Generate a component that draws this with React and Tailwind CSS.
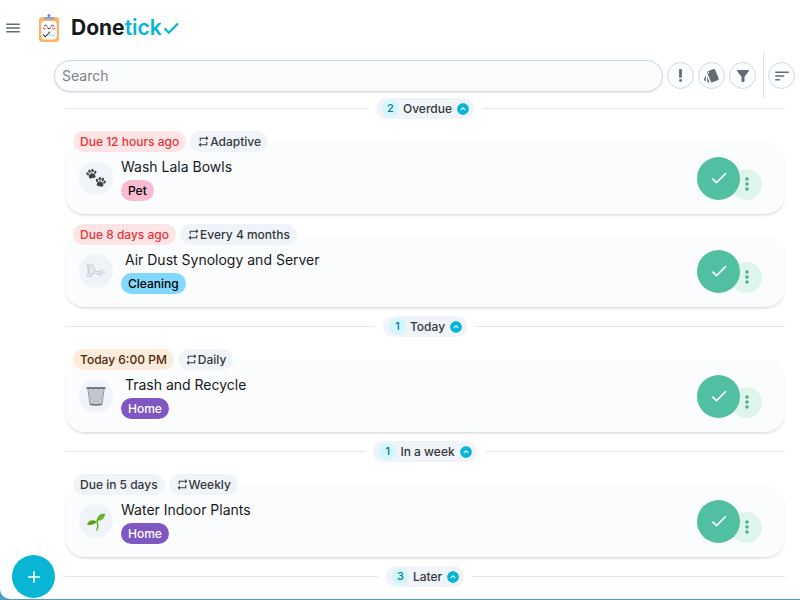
import {
  MdAdd,
  MdCheck,
  MdExpandCircleDown,
  MdFilterAlt,
  MdMenu,
  MdMoreVert,
  MdPriorityHigh,
  MdRepeat,
  MdSort,
  MdStyle,
} from 'react-icons/md';

const sections = [
  {
    title: 'Overdue',
    count: 2,
    chores: [
      { name: 'Wash Lala Bowls', due: 'Due 12 hours ago', status: 'overdue', repeat: 'Adaptive', label: 'Pet', icon: 'paws' },
      { name: ' Air Dust Synology and Server', due: 'Due 8 days ago', status: 'overdue', repeat: 'Every 4 months', label: 'Cleaning', icon: 'wind' },
    ],
  },
  {
    title: 'Today',
    count: 1,
    chores: [
      { name: ' Trash and Recycle', due: 'Today 6:00 PM', status: 'today', repeat: 'Daily', label: 'Home', icon: 'basket' },
    ],
  },
  {
    title: 'In a week',
    count: 1,
    chores: [
      { name: 'Water Indoor Plants', due: 'Due in 5 days', status: 'later', repeat: 'Weekly', label: 'Home', icon: 'plant' },
    ],
  },
  { title: 'Later', count: 3, chores: [] },
];

const dueColors = {
  overdue: 'bg-[#fde5e5] text-[#e5343a]',
  today: 'bg-[#fdecdb] text-[#49290c]',
  later: 'bg-[#f0f4f8] text-[#32383e]',
};

const labelColors = {
  Pet: 'bg-[#f8bbd0] text-black',
  Cleaning: 'bg-[#80d8ff] text-black',
  Home: 'bg-[#7e57c2] text-white',
};

function Logo() {
  return (
    <svg viewBox="0 0 22 30" className="h-[30px] w-[22px]" aria-hidden="true">
      <rect x="1" y="4" width="20" height="25" rx="3.5" fill="#fbb466" />
      <rect x="3.2" y="8" width="15.6" height="18.5" rx="4" fill="#fff" />
      <path d="M5.5 6.6c0-2 1.4-2.6 3.2-2.6h4.6c1.8 0 3.2.6 3.2 2.6z" fill="#8f9ce0" />
      <circle cx="11" cy="2.4" r="1.5" fill="#7785d3" />
      <path d="M6 13q1.5-2 3 0M13 13q1.5-2 3 0M9.4 15q1.6 1.6 3.2 0" fill="none" stroke="#333" strokeWidth="1" strokeLinecap="round" />
      <path d="M5.2 15.6h2.4M14.4 15.6h2.4" stroke="#f8697a" strokeWidth="1.4" strokeLinecap="round" />
      <path d="m5.4 21.8 1.8 2 4.6-4.6" fill="none" stroke="#333" strokeWidth="1.1" strokeLinecap="round" />
      <path d="M11.6 22.4h4.6" stroke="#a2f1e5" strokeWidth="1.8" strokeLinecap="round" />
    </svg>
  );
}

function Paw({ transform }) {
  return (
    <g transform={transform} fill="#414141">
      <path d="M0-.6c1.6 0 3.4 1.9 3.4 3.5 0 1.9-2 1.4-3.4 1.4s-3.4.5-3.4-1.4C-3.4 1.3-1.6-.6 0-.6z" />
      <ellipse cx="-3.9" cy="-.7" rx="1.1" ry="1.7" transform="rotate(-25 -3.9 -.7)" />
      <ellipse cx="-1.5" cy="-3" rx="1.2" ry="1.8" />
      <ellipse cx="1.5" cy="-3" rx="1.2" ry="1.8" />
      <ellipse cx="3.9" cy="-.7" rx="1.1" ry="1.7" transform="rotate(25 3.9 -.7)" />
    </g>
  );
}

function ChoreIcon({ name }) {
  return (
    <svg viewBox="0 0 20 20" className="size-5" fill="none" aria-hidden="true">
      {name === 'paws' && (
        <>
          <Paw transform="translate(5.6 5.8) rotate(-12)" />
          <Paw transform="translate(14.6 14) rotate(12)" />
        </>
      )}
      {name === 'wind' && (
        <>
          <path d="M1.5 3.5c3-1 6 .2 6.6 3l1.3 2.8-1.3.8.2 2.4-2.9.3.6 2.4H1.2l1.2-3.2z" fill="#e8ebef" stroke="#bcc4cd" strokeWidth=".8" />
          <path d="M3 4.5v8M5 5.5l1.5 2" stroke="#c6cdd5" strokeWidth=".9" />
          <path d="M10 10.5h4.500c2 0 2-2.300.5-2.300M10.500 12h6.800c2 0 1.700-2.500.2-2.300M11 13.400h3.600c1.600 0 1.400 2 .2 1.800" stroke="#c3cad2" strokeWidth=".9" strokeLinecap="round" />
        </>
      )}
      {name === 'basket' && (
        <>
          <path d="M1.8 2.2h16.4L16 18.5q-6 1.3-12 0z" fill="#d4d8dc" stroke="#7e868c" strokeWidth=".8" />
          <path d="m2 6 13 12M2.6 3 16.5 15M6 2.5 17 12M10.5 2.5 17.5 8M3 10l9 8.5M3.5 14l4.5 4.5M18 6 5 18M17.4 3 3.5 15M14 2.5 3 12M9.5 2.5 2.5 8M17 10l-9 8.5M16.5 14 12 18.5" stroke="#959ca2" strokeWidth=".6" />
          <path d="M1 2h18" stroke="#596269" strokeWidth="1.5" strokeLinecap="round" />
          <path d="M4 18.3q6 1.3 12 0" stroke="#687178" strokeWidth="1.2" />
        </>
      )}
      {name === 'plant' && (
        <>
          <path d="M11 19c1-3 .8-6.5 0-9" stroke="#65ad25" strokeWidth="1.5" strokeLinecap="round" />
          <path d="M10.6 10.2C10.8 5 14.5 2 19.3 2.5 18.8 7.5 15.5 10 10.6 10.2z" fill="#70bb2a" />
          <path d="M10.8 10.5C7 8.3 2.2 9 1 13.8c4.3.8 7.7-.2 9.8-3.3z" fill="#5ca91f" />
          <path d="M11.5 9.2C13 6.5 15.5 4.6 18 3.5M10 10.8c-2.5.4-5 1.2-7.5 2.5" stroke="#458f15" strokeWidth=".7" />
        </>
      )}
    </svg>
  );
}

function Chip({ className, children }) {
  return (
    <span className={`flex h-[21px] items-center whitespace-nowrap rounded-full px-[7px] text-[12px] font-medium leading-[21px] ${className}`}>
      {children}
    </span>
  );
}

function RoundButton({ label, children }) {
  return (
    <button
      type="button"
      aria-label={label}
      className="flex size-[27px] shrink-0 items-center justify-center rounded-full border border-[#cdd9e6] bg-[#fcfdff] text-[#636b74]"
    >
      {children}
    </button>
  );
}

function SectionDivider({ title, count }) {
  return (
    <div className="flex items-center gap-2 before:h-px before:flex-1 before:bg-[#e3e6e9] after:h-px after:flex-1 after:bg-[#e3e6e9]">
      <button
        type="button"
        className="flex h-[21px] items-center rounded-full bg-[#f0f4f8] pl-1.5 pr-1 text-[12px] font-medium leading-[21px] text-[#32383e]"
      >
        <span className="mr-1 flex size-[17px] items-center justify-center rounded-full bg-[#cff7fd] text-[11px] text-[#0e7490]">
          {count}
        </span>
        {title}
        <MdExpandCircleDown className="ml-1 size-[14px] rotate-180 text-[#06b6d4]" />
      </button>
    </div>
  );
}

function ChoreCard({ chore }) {
  return (
    <article>
      <div className="relative z-10 ml-2 flex gap-1">
        <Chip className={dueColors[chore.status]}>{chore.due}</Chip>
        <Chip className="bg-[#f0f4f8] text-[#32383e]">
          <MdRepeat className="size-[13px]" />
          {chore.repeat}
        </Chip>
      </div>
      <div className="-mt-2.5 flex h-[72px] items-center rounded-[20px] bg-[#fbfcfe] pl-3.5 pr-[23px] shadow-[0_2px_3px_-1px_rgba(21,21,21,0.2)]">
        <div className="flex size-[34px] shrink-0 items-center justify-center rounded-full bg-[#f0f4f8]">
          <ChoreIcon name={chore.icon} />
        </div>
        <div className="ml-2 min-w-0 flex-1 pt-px">
          <h3 className="truncate whitespace-pre text-[14px] leading-[22px] text-[#171a1c]">{chore.name}</h3>
          <div className="mt-0.5 flex">
            <Chip className={labelColors[chore.label]}>{chore.label}</Chip>
          </div>
        </div>
        <div className="flex items-end">
          <button
            type="button"
            aria-label="Complete"
            className="z-10 flex size-[43px] items-center justify-center rounded-full bg-[#51bfa1] text-white"
          >
            <MdCheck className="size-5" />
          </button>
          <button
            type="button"
            aria-label="More actions"
            className="-ml-[9px] flex size-[31px] items-center justify-center rounded-full bg-[#def5eb] text-[#42ad91]"
          >
            <MdMoreVert className="size-5" />
          </button>
        </div>
      </div>
    </article>
  );
}

export default function App() {
  return (
    <div className="h-screen overflow-hidden bg-[#4aa0bd] pb-px font-['Inter',sans-serif]">
      <div className="h-full overflow-hidden rounded-bl-[10px] bg-white">
        <header className="flex h-[53px] items-center pl-1 pt-0.5">
          <button type="button" aria-label="Menu" className="text-[#636b74]">
            <MdMenu className="size-[18px]" />
          </button>
          <div className="ml-4 flex items-center">
            <Logo />
            <h1 className="ml-[11px] text-[21px] font-bold leading-7 text-[#171a1c]">
              Done<span className="font-semibold text-[#06b6d4]">tick</span>
            </h1>
            <svg viewBox="0 0 18 18" className="size-[18px]" fill="none" aria-hidden="true">
              <path d="m2.5 9.4 4.3 4.3 9.200-9.200" stroke="#06b6d4" strokeWidth="2.200" />
            </svg>
          </div>
        </header>

        <main>
          <div className="flex items-center pl-[54px] pr-[5px]">
            <input
              type="text"
              placeholder="Search"
              aria-label="Search"
              className="mr-1 h-8 min-w-0 flex-1 rounded-full border border-[#cdd9e6] bg-[#fbfcfe] px-[7px] text-[14px] text-[#171a1c] shadow-[0_1px_2px_rgba(21,21,21,0.1)] outline-none placeholder:text-[#7d8083]"
            />
            <div className="flex gap-1">
              <RoundButton label="Priority">
                <MdPriorityHigh className="size-[17px]" />
              </RoundButton>
              <RoundButton label="Labels">
                <MdStyle className="size-[17px]" />
              </RoundButton>
              <RoundButton label="Filter">
                <MdFilterAlt className="size-[18px]" />
              </RoundButton>
            </div>
            <div className="ml-[7px] mr-1 h-[45px] w-px bg-[#dfe3e7]" />
            <RoundButton label="Sort">
              <MdSort className="size-[18px]" />
            </RoundButton>
          </div>

          <div className="flex flex-col gap-[9px] pl-[65px] pr-[15px]">
            {sections.map((section) => (
              <section key={section.title}>
                <SectionDivider title={section.title} count={section.count} />
                {section.chores.length > 0 && (
                  <div className="mt-3 flex flex-col gap-2.5">
                    {section.chores.map((chore) => (
                      <ChoreCard key={chore.name} chore={chore} />
                    ))}
                  </div>
                )}
              </section>
            ))}
          </div>
        </main>
      </div>

      <button
        type="button"
        aria-label="Add chore"
        className="fixed bottom-0.5 left-3 flex size-[43px] items-center justify-center rounded-full bg-[#08b5d5] text-white"
      >
        <MdAdd className="size-5" />
      </button>
    </div>
  );
}
